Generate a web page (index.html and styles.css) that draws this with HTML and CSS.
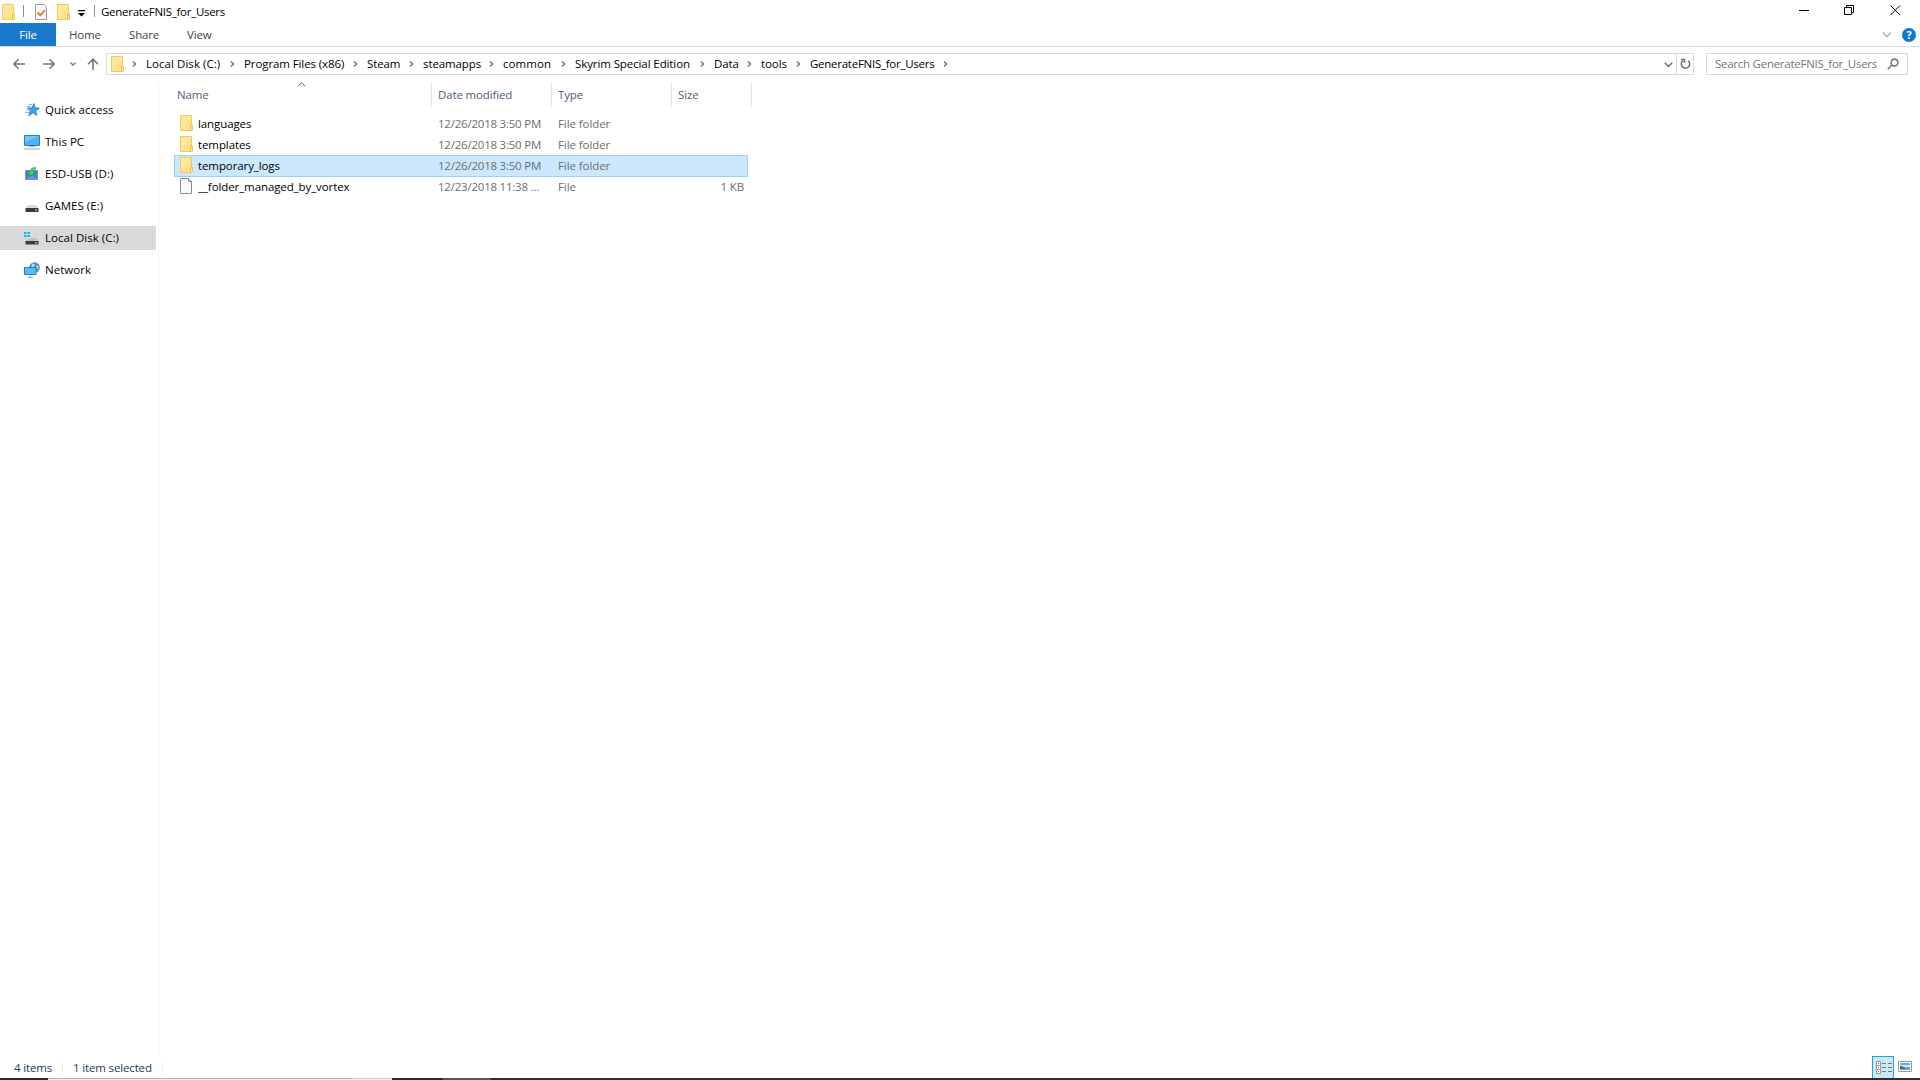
FILE: index.html
```html
<!DOCTYPE html>
<html lang="en">
  <head>
    <meta charset="utf-8">
    <title>GenerateFNIS_for_Users</title>
    <link rel="stylesheet" href="styles.css">
  </head>
  <body>
    <svg class="defs" width="0" height="0">
      <symbol id="folder" viewBox="0 0 16 16">
        <path d="M2.500.5h11v9.500h1v5.500h-12z" fill="#ffe79b" stroke="#efcb5e"/>
        <path d="M3 15L13 3v12z" fill="#ffdd80" opacity=".5"/>
        <path d="M12.500 15.500v-5h1.500" stroke="#e8bf45" fill="none"/>
      </symbol>
      <symbol id="chevron" viewBox="0 0 6 6">
        <path d="M1 .5L3.500 3 1 5.500" fill="none" stroke="#767676" stroke-width="1.500"/>
      </symbol>
    </svg>

    <header class="title-bar">
      <svg class="icon"><use href="#folder"/></svg>
      <span class="title-sep"></span>
      <svg class="icon task-icon" viewBox="0 0 16 16">
        <path d="M2.500.5h8.500l2.500 2.500v12.500h-11z" fill="#f7f7f7" stroke="#9b9b9b"/>
        <path d="M4.500 8.500l2.800 2.800 4.700-5.300" fill="none" stroke="#ee6c2b" stroke-width="1.800"/>
      </svg>
      <svg class="icon new-folder"><use href="#folder"/></svg>
      <svg class="customize" width="8" height="8" viewBox="0 0 8 8"><path d="M0 0h7v1.200H0zM0 3h7L3.500 6.500z"/></svg>
      <span class="title-sep title-sep-last"></span>
      <span class="title">GenerateFNIS_for_Users</span>
      <div class="window-buttons">
        <svg width="11" height="11" viewBox="0 0 11 11"><path d="M1 5.500h10" /></svg>
        <svg width="11" height="11" viewBox="0 0 11 11"><path d="M.5 2.500h7v7h-7zM2.500 2.500v-2h7v7h-2"/></svg>
        <svg width="11" height="11" viewBox="0 0 11 11"><path d="M.5.5l9.500 9.500M10 .5L.5 10"/></svg>
      </div>
    </header>

    <nav class="ribbon">
      <span class="tab tab-file">File</span>
      <span class="tab tab-home">Home</span>
      <span class="tab tab-share">Share</span>
      <span class="tab tab-view">View</span>
      <svg class="expand" width="10" height="6" viewBox="0 0 10 6"><path d="M1 .7l4 4 4-4"/></svg>
      <span class="help">?</span>
    </nav>

    <div class="nav-bar">
      <div class="nav-arrows">
        <svg width="13" height="12" viewBox="0 0 13 12"><path d="M12 6H1M5.500 1.200L.8 6l4.700 4.800"/></svg>
        <svg width="13" height="12" viewBox="0 0 13 12"><path d="M0 6h11M6.500 1.200L11.200 6l-4.700 4.800"/></svg>
        <svg class="recent" width="6" height="6" viewBox="0 0 6 6"><path d="M.5 1.500L3 4l2.500-2.500"/></svg>
        <svg width="13" height="12" viewBox="0 0 13 12"><path d="M6 12V1.500M1 6.200l5-5 5 5"/></svg>
      </div>
      <div class="address">
        <svg class="icon"><use href="#folder"/></svg>
        <div class="crumbs">
          <span class="wide"><svg><use href="#chevron"/></svg>Local Disk (C:)</span>
          <span><svg><use href="#chevron"/></svg>Program Files (x86)</span>
          <span><svg><use href="#chevron"/></svg>Steam</span>
          <span><svg><use href="#chevron"/></svg>steamapps</span>
          <span class="wide"><svg><use href="#chevron"/></svg>common</span>
          <span><svg><use href="#chevron"/></svg>Skyrim Special Edition</span>
          <span><svg><use href="#chevron"/></svg>Data</span>
          <span><svg><use href="#chevron"/></svg>tools</span>
          <span class="narrow"><svg><use href="#chevron"/></svg>GenerateFNIS_for_Users</span>
          <span><svg><use href="#chevron"/></svg></span>
        </div>
        <svg class="history" width="9" height="7" viewBox="0 0 9 7"><path d="M.8 1.700l3.700 3.700 3.700-3.700"/></svg>
        <div class="refresh">
          <svg width="11" height="12" viewBox="0 0 11 12"><path d="M8.200 2.800A4.200 4.200 0 1 1 3 2.600M1 1.500h3.500V5"/></svg>
        </div>
      </div>
      <div class="search">
        <span class="narrow">Search GenerateFNIS_for_Users</span>
        <svg width="12" height="12" viewBox="0 0 12 12"><circle cx="7.500" cy="4.500" r="3.400"/><path d="M5 7L.8 11.200"/></svg>
      </div>
    </div>

    <main class="content">
      <aside class="sidebar">
        <div class="place">
          <svg class="icon" viewBox="0 0 16 16">
            <path d="M10 1.500l1 4.300 4.500.4-3.800 2.600 1.200 4.700-3.900-2.700-4.300 3 1.700-5L3.500 6h4.200z" fill="#37a5ea" stroke="#1b7fc4" stroke-width=".8"/>
            <path d="M4 2.500h4M3 4.500h4M2 8h3M1 10.500h4" stroke="#7cc4ef"/>
          </svg>
          <span>Quick access</span>
        </div>
        <div class="place">
          <svg class="icon" viewBox="0 0 16 16">
            <path d="M.5 1.500h15v10H.5z" fill="#6cc6ff" stroke="#2d7bb5"/>
            <path d="M1 11V8l14-6v9z" fill="#36a7f7" opacity=".6"/>
            <path d="M5 12.500h6M0 15h16" stroke="#9aa7b6"/>
          </svg>
          <span>This PC</span>
        </div>
        <div class="place">
          <svg class="icon" viewBox="0 0 16 16">
            <path d="M1.500 4.500h12v9h-12z" fill="#3f7fd0" stroke="#7f92ad"/>
            <path d="M2 13l6-4 5 4z" fill="#5f97dd"/>
            <path d="M11.500 1.500C8 1.500 6 3 6 6H3.500L7 10l4-4H9c0-2 .8-3 2.500-3z" fill="#2fd65c" stroke="#1fa04a" stroke-width=".6"/>
          </svg>
          <span>ESD-USB (D:)</span>
        </div>
        <div class="place">
          <svg class="icon" viewBox="0 0 16 16">
            <path d="M4 7h8l2.500 3h-13z" fill="#d8d8d8"/>
            <path d="M1.500 10h13v4h-13z" fill="#3b3b3b"/>
            <path d="M11 12h2" stroke="#42e052" stroke-width="1.500"/>
          </svg>
          <span>GAMES (E:)</span>
        </div>
        <div class="place place-active">
          <svg class="icon" viewBox="0 0 16 16">
            <path d="M7 8h5l2.500 3h-13z" fill="#c0c0c0"/>
            <path d="M1.500 11h13v3.500h-13z" fill="#3b3b3b"/>
            <path d="M11 12.700h2" stroke="#42e052" stroke-width="1.500"/>
            <path d="M0 2h2.600v2H0zM3.400 2H6v2H3.400zM0 5h2.600v2H0zM3.400 5H6v2H3.400z" fill="#18b5f0"/>
          </svg>
          <span>Local Disk (C:)</span>
        </div>
        <div class="place">
          <svg class="icon" viewBox="0 0 16 16">
            <circle cx="10.500" cy="5.500" r="5.300" fill="#4f8fae"/>
            <path d="M8 1.500l3 .5-1 3-3 1zM12 3l3 2-2 3z" fill="#b6dbe4"/>
            <path d="M.5 5.500h11.500v7H.5z" fill="#55bdff" stroke="#2d7bb5"/>
            <path d="M6 13v2M3.500 15.500h5.500" stroke="#9aa7b6"/>
          </svg>
          <span>Network</span>
        </div>
      </aside>

      <section class="files">
        <div class="file-head">
          <span class="col-name">Name
            <svg class="sort" width="9" height="5" viewBox="0 0 9 5"><path d="M.7 4.500l3.800-3.800 3.800 3.800"/></svg>
          </span>
          <span>Date modified</span>
          <span>Type</span>
          <span>Size</span>
        </div>
        <div class="file-row">
          <svg class="icon"><use href="#folder"/></svg>
          <span class="file-name">languages</span>
          <span class="date">12/26/2018 3:50 PM</span>
          <span class="type">File folder</span>
          <span class="size"></span>
        </div>
        <div class="file-row">
          <svg class="icon"><use href="#folder"/></svg>
          <span class="file-name">templates</span>
          <span class="date">12/26/2018 3:50 PM</span>
          <span class="type">File folder</span>
          <span class="size"></span>
        </div>
        <div class="file-row file-row-selected">
          <svg class="icon"><use href="#folder"/></svg>
          <span class="file-name">temporary_logs</span>
          <span class="date">12/26/2018 3:50 PM</span>
          <span class="type">File folder</span>
          <span class="size"></span>
        </div>
        <div class="file-row">
          <svg class="icon" viewBox="0 0 16 16">
            <path d="M2.500.5h8l3 3v12h-11z" fill="#f9f9f9" stroke="#8c8c8c"/>
            <path d="M10.500.5v3h3" fill="none" stroke="#8c8c8c"/>
          </svg>
          <span class="file-name">__folder_managed_by_vortex</span>
          <span class="date">12/23/2018 11:38 ...</span>
          <span class="type">File</span>
          <span class="size">1 KB</span>
        </div>
      </section>
    </main>

    <footer class="status-bar">
      <span class="status-count">4 items</span>
      <span class="status-selected">1 item selected</span>
      <div class="view-details">
        <svg width="16" height="13" viewBox="0 0 16 13">
          <path d="M.5.5h4v12h-4zM.5 4.500h4M.5 8.500h4" fill="#fff" stroke="#9a9a9a"/>
          <path d="M6 2.500h4M12 2.500h4M6 6.500h4M12 6.500h4M6 10.500h4M12 10.500h4" stroke="#777"/>
          <path d="M2 2h1v1H2z" fill="#555"/><path d="M2 6h1v1H2z" fill="#2e86c1"/><path d="M2 10h1v1H2z" fill="#c22"/>
        </svg>
      </div>
      <svg class="view-large" width="14" height="11" viewBox="0 0 14 11">
        <path d="M.5.5h13v10H.5z" fill="#fff" stroke="#9a9a9a"/>
        <path d="M2 2h10v7H2z" fill="#72a9ec"/>
        <path d="M2 4h10v2H2z" fill="#d3e6f8"/>
        <path d="M2 5l3 1 3 .5 4-.5v3H2z" fill="#6f9fc2"/>
        <path d="M2 5l3 1 3 1.500H2z" fill="#2e6151"/>
      </svg>
    </footer>
    <div class="taskbar">
      <span class="task-a"></span>
      <span class="task-b"></span>
      <span class="task-c"></span>
      <span class="task-d"></span>
      <span class="task-e"></span>
    </div>
  </body>
</html>
```
FILE: styles.css
```css
* {
  box-sizing: border-box;
}

body {
  margin: 0;
  height: 1080px;
  display: flex;
  flex-direction: column;
  overflow: hidden;
  background: #fff;
  color: #000;
  font-family: "Open Sans", "Noto Sans", sans-serif;
  font-size: 11.5px;
  line-height: 16px;
  letter-spacing: -0.15px;
  white-space: nowrap;
}

svg {
  flex: none;
}

.defs {
  position: absolute;
}

.icon {
  width: 16px;
  height: 16px;
}

.title-bar {
  height: 23px;
  display: flex;
  align-items: center;
}

.title-sep {
  width: 1px;
  height: 12px;
  margin: 0 0 1px 7px;
  background: #8c8c8c;
}

.task-icon {
  margin-left: 9px;
}

.new-folder {
  margin-left: 6px;
}

.customize {
  margin: 4px 0 0 7px;
}

.title-sep-last {
  margin-left: 8px;
}

.title {
  margin-left: 6px;
  letter-spacing: -0.28px;
}

.window-buttons {
  margin: 0 19px 3px auto;
  display: flex;
  gap: 35px;
}

.window-buttons path {
  fill: none;
  stroke: #000;
}

.ribbon {
  height: 24px;
  display: flex;
  align-items: center;
  border-bottom: 1px solid #dadbdc;
  color: #444;
}

.tab {
  height: 23px;
  line-height: 23px;
}

.tab-file {
  width: 56px;
  text-align: center;
  background: #1979ca;
  color: #fff;
}

.tab-home {
  margin-left: 13px;
  width: 60px;
}

.tab-share {
  width: 58px;
}

.expand {
  margin-left: auto;
}

.expand path,
.nav-arrows path,
.history path,
.refresh path,
.search svg {
  fill: none;
  stroke: #767676;
  stroke-width: 1.6;
}

.expand path {
  stroke: #a0a0a0;
  stroke-width: 1.2;
}

.help {
  width: 14px;
  height: 14px;
  margin: 0 4px 0 10px;
  border-radius: 50%;
  background: #0b78d1;
  color: #fff;
  font-size: 11px;
  font-weight: bold;
  line-height: 14px;
  text-align: center;
}

.nav-bar {
  height: 35px;
  padding: 6px 12px 7px 0;
  display: flex;
  align-items: center;
}

.nav-arrows {
  width: 106px;
  padding-left: 13px;
  display: flex;
  align-items: center;
}

.nav-arrows svg:nth-child(2) {
  margin-left: 17px;
}

.nav-arrows .recent {
  margin: 0 11px 0 14px;
}

.nav-arrows .recent path {
  stroke-width: 1.3;
}

.address {
  flex: 1;
  height: 22px;
  padding-left: 2px;
  display: flex;
  align-items: center;
  border: 1px solid #d9d9d9;
}

.crumbs {
  flex: 1;
  margin-left: 7px;
  display: grid;
  grid-template-columns: 98px 123px 56px 80px 72px 139px 47px 49px 147px 10px;
  letter-spacing: -0.1px;
}

.crumbs span {
  display: flex;
  align-items: center;
}

.crumbs svg {
  width: 6px;
  height: 6px;
  margin-right: 8px;
}

.wide {
  letter-spacing: 0.05px;
}

.narrow {
  letter-spacing: -0.26px;
}

.history {
  margin-right: 3px;
}

.refresh {
  width: 17px;
  height: 20px;
  display: flex;
  align-items: center;
  justify-content: center;
  border-left: 1px solid #d9d9d9;
}

.search {
  width: 202px;
  height: 22px;
  margin-left: 12px;
  padding: 0 8px;
  display: flex;
  align-items: center;
  justify-content: space-between;
  border: 1px solid #d9d9d9;
  color: #767676;
}

.content {
  height: 974px;
  display: flex;
}

.sidebar {
  width: 159px;
  padding-top: 16px;
  display: flex;
  flex-direction: column;
  gap: 8px;
  border-right: 1px solid #f3f3f3;
  letter-spacing: 0.03px;
}

.place {
  width: 156px;
  height: 24px;
  padding-left: 24px;
  display: flex;
  align-items: center;
  gap: 5px;
}

.place-active {
  background: #d9d9d9;
}

.files {
  width: 593px;
  padding-left: 15px;
}

.file-head {
  height: 25px;
  display: grid;
  grid-template-columns: 258px 120px 120px 80px;
  color: #4c607a;
}

.file-head span {
  padding-left: 6px;
  border-right: 1px solid #e5e5e5;
  line-height: 25px;
}

.file-head .col-name {
  padding-left: 3px;
  position: relative;
}

.sort {
  position: absolute;
  left: 123px;
  top: 0;
}

.sort path {
  fill: none;
  stroke: #666;
}

.file-row {
  width: 574px;
  height: 21px;
  padding: 2px 0 0 4px;
  display: grid;
  grid-template-columns: 20px 240px 120px 120px 66px;
  align-items: start;
  color: #6d6d6d;
  line-height: 18px;
}

.file-head + .file-row {
  margin-top: 6px;
}

.file-row-selected {
  height: 22px;
  margin-bottom: -1px;
  padding: 1px 0 0 3px;
  border: 1px solid #99d1ff;
  background: #cce8ff;
}

.file-name {
  color: #000;
  letter-spacing: -0.1px;
}

.date {
  letter-spacing: -0.22px;
}

.type {
  letter-spacing: -0.08px;
}

.size {
  text-align: right;
}

.status-bar {
  height: 22px;
  display: flex;
  align-items: center;
  color: #1e395b;
}

.status-count,
.status-selected {
  height: 11px;
  line-height: 12px;
  border-right: 1px solid #ededed;
}

.status-count {
  width: 63px;
  padding-left: 14px;
}

.status-selected {
  width: 100px;
  padding-left: 10px;
}

.view-details {
  width: 22px;
  height: 22px;
  margin-left: auto;
  padding: 4px 0 0 3px;
  border: 1px solid #26a0da;
  border-bottom: 0;
  background: #cbe8f6;
}

.view-large {
  margin: 0 8px 1px 4px;
}

.taskbar {
  height: 2px;
  display: flex;
}

.task-a {
  width: 48px;
  background: #2b2b2b;
}

.task-b {
  width: 304px;
  border-top: 1px solid #b5b5b5;
  background: #ededed;
}

.task-c {
  width: 40px;
  border-top: 1px solid #c9c9c9;
  background: #ededed;
}

.task-d {
  width: 51px;
  background: #2b2b2b;
}

.task-e {
  flex: 1;
  background: linear-gradient(90deg, #555 48px, #2d2e32 48px);
}
```
